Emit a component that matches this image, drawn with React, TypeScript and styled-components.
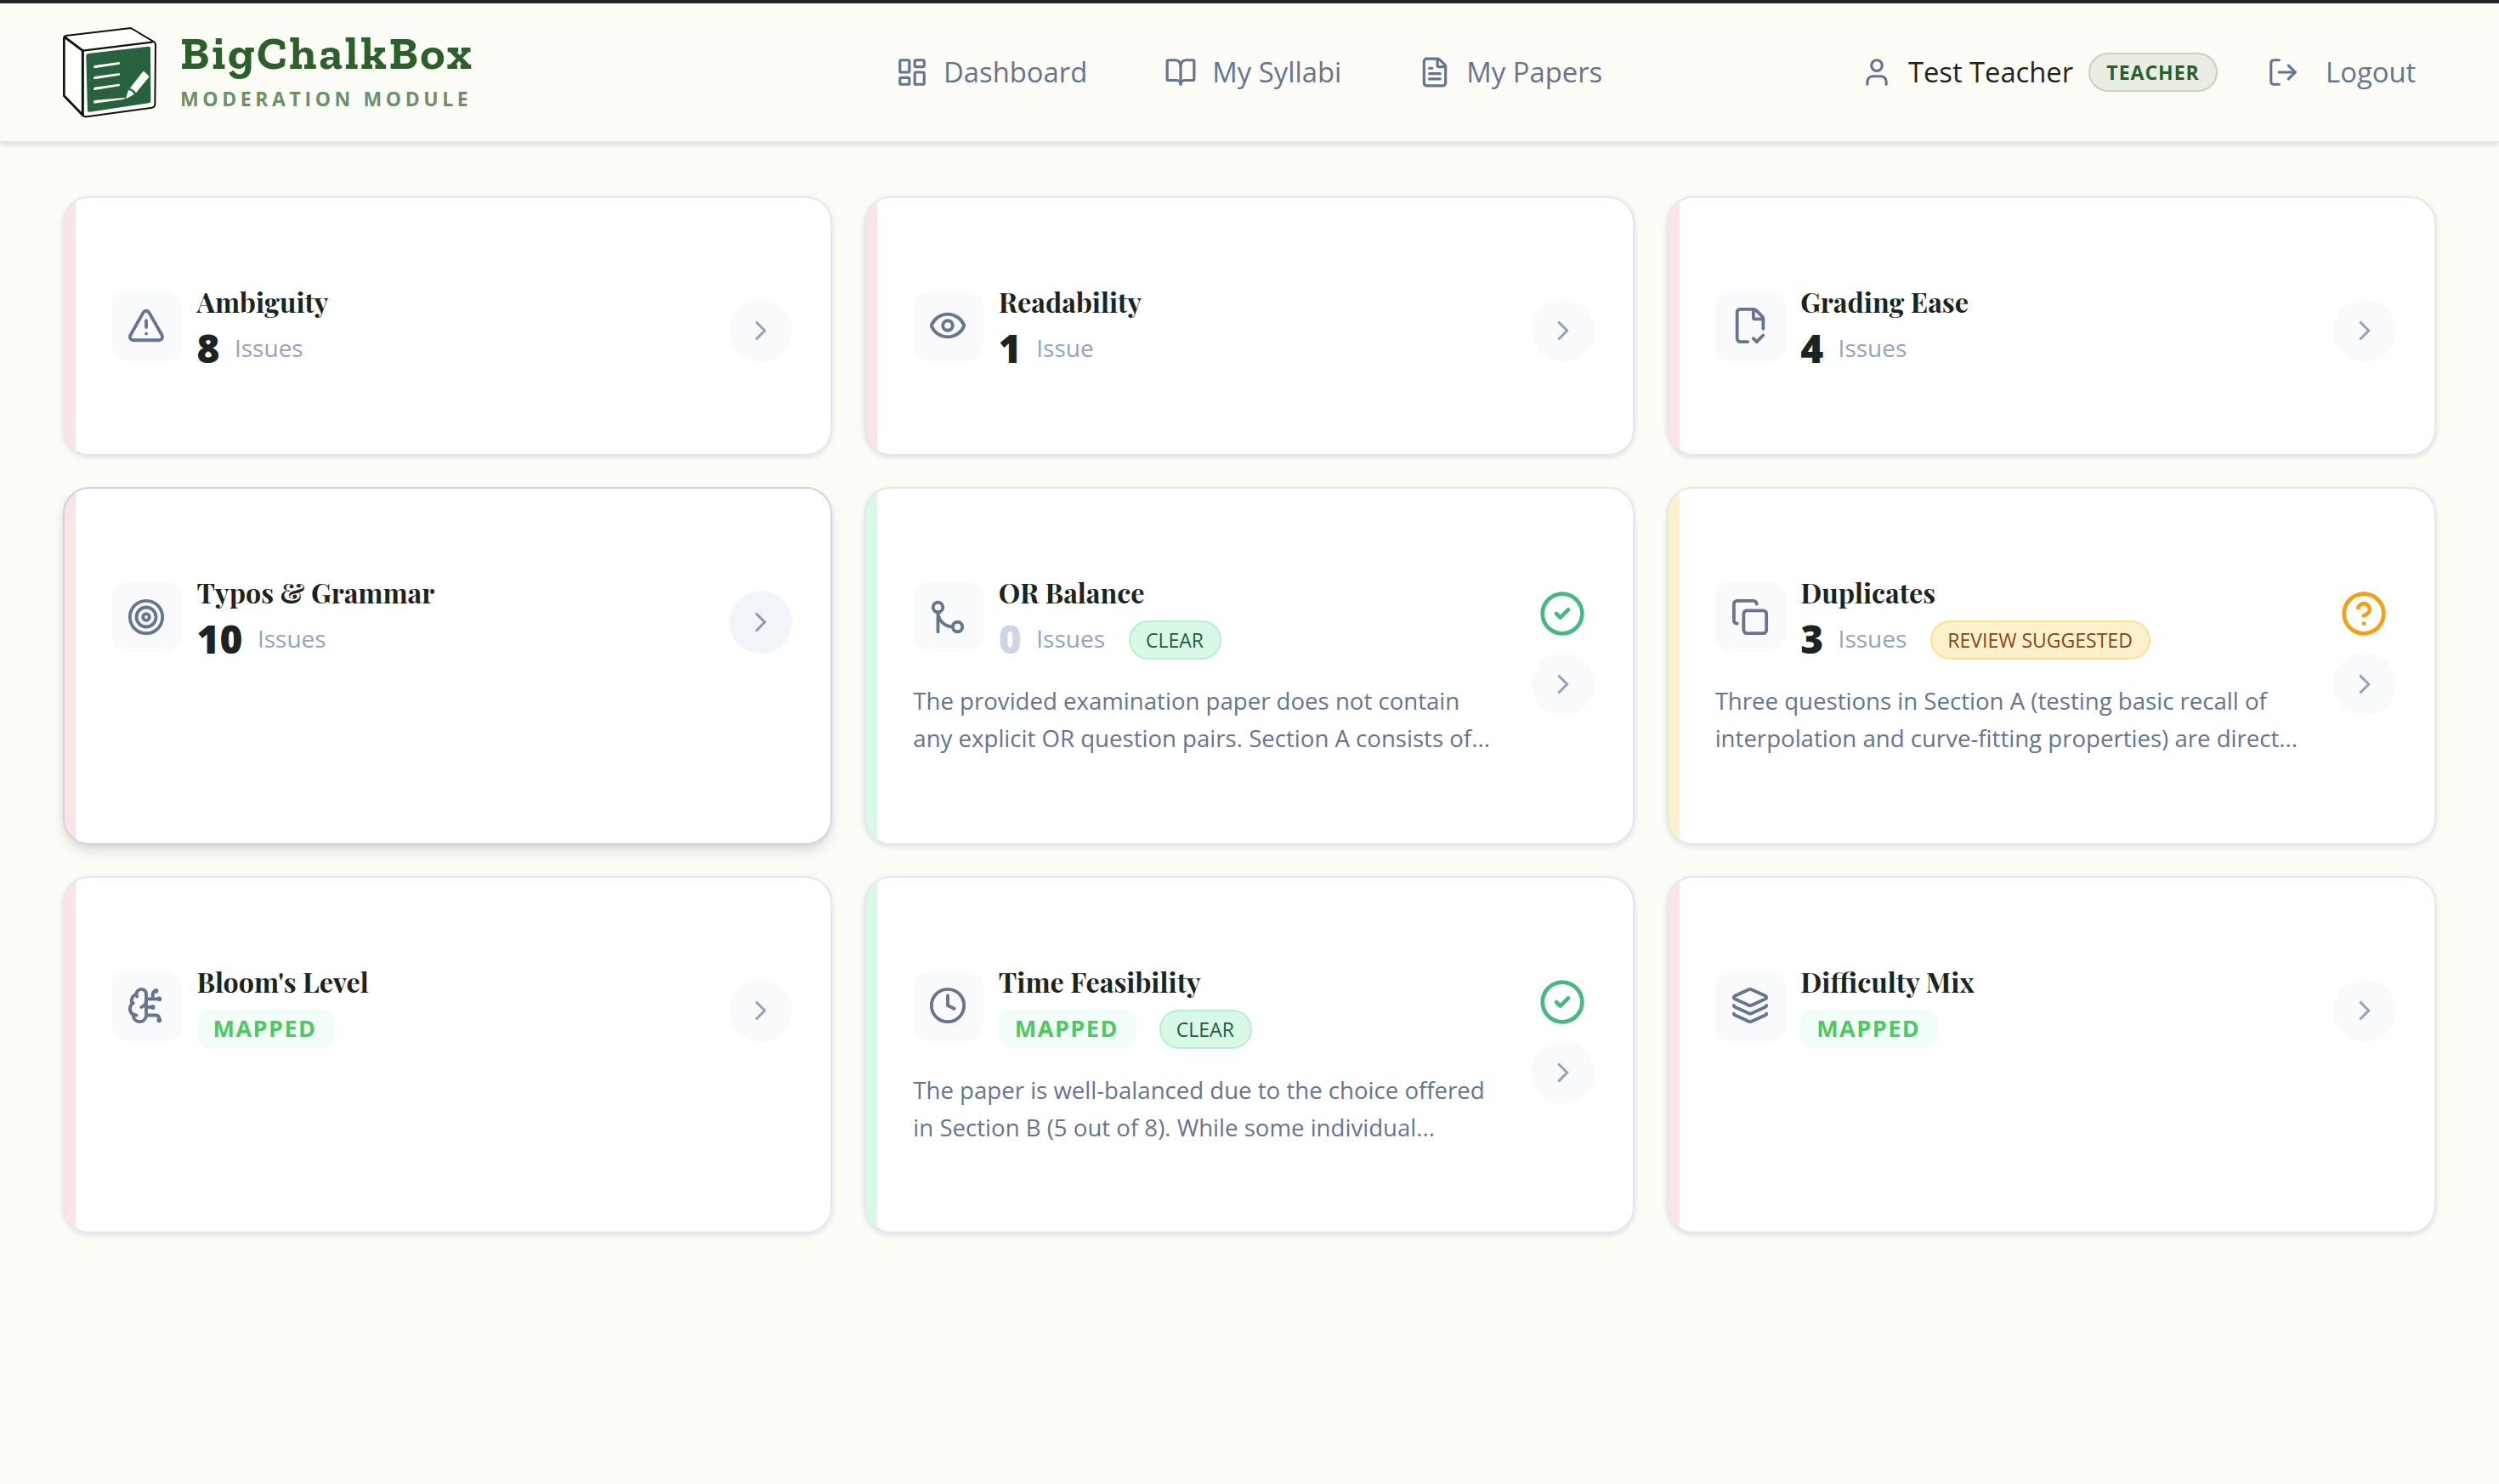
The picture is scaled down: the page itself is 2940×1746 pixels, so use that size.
import React from "react";
import styled, { createGlobalStyle } from "styled-components";
import {
  BookOpen,
  BrainCircuit,
  ChevronRight,
  CircleCheck,
  CircleQuestionMark,
  Clock,
  Copy,
  Eye,
  FileCheckCorner,
  FileText,
  GitMerge,
  Layers,
  LayoutDashboard,
  LogOut,
  Target,
  TriangleAlert,
  User,
  type LucideIcon,
} from "lucide-react";

type Tone = "red" | "green" | "yellow";

const barColor: Record<Tone, string> = {
  red: "#fce4e6",
  green: "#d8f9e6",
  yellow: "#fcf1cb",
};

const GlobalStyle = createGlobalStyle`
  *, *::before, *::after { box-sizing: border-box; }
  html, body { margin: 0; padding: 0; background: #fbfcf6; }
  body {
    font-family: "Open Sans", "Noto Sans", sans-serif;
    color: #1c2422;
    overflow: hidden;
  }
`;

const Page = styled.div`
  width: 2940px;
  height: 1746px;
  background: #fbfcf6;
  display: flex;
  flex-direction: column;
`;

const Header = styled.header`
  height: 168px;
  border-top: 4px solid #212629;
  border-bottom: 2px solid #e2e8f0;
  box-shadow: 0 2px 6px rgba(0, 0, 0, 0.15);
  display: grid;
  grid-template-columns: 981px 1fr 751px;
  align-items: center;
  padding: 0 0 0 73px;
`;

const Brand = styled.div`
  display: flex;
  align-items: center;
  gap: 27px;
`;

const BrandText = styled.div`
  display: flex;
  flex-direction: column;
`;

const BrandName = styled.div`
  margin-top: -4px;
  font-family: "Zilla Slab", "DejaVu Serif Condensed", "DejaVu Serif", serif;
  font-weight: 700;
  font-size: 55px;
  line-height: 60px;
  letter-spacing: 2.8px;
  color: #2d5f2a;
  white-space: nowrap;
`;

const BrandSub = styled.div`
  font-weight: 700;
  font-size: 23px;
  line-height: 32px;
  letter-spacing: 4.6px;
  color: #6c9069;
  white-space: nowrap;
  margin: 8px 0 2px;
`;

const Nav = styled.nav`
  display: flex;
  align-items: center;
  gap: 91px;
`;

const NavItem = styled.a<{ $gap?: number }>`
  display: flex;
  align-items: center;
  gap: ${(p) => p.$gap ?? 18}px;
  font-size: 32.8px;
  line-height: 44px;
  color: #66748f;
  white-space: nowrap;
`;

const Account = styled.div`
  display: flex;
  align-items: center;
`;

const UserName = styled.span`
  font-size: 32.7px;
  line-height: 44px;
  color: #1c2422;
  margin-left: 18px;
  white-space: nowrap;
`;

const RoleBadge = styled.span`
  height: 46px;
  width: 152px;
  margin: 0 58px 0 18px;
  display: flex;
  align-items: center;
  justify-content: center;
  border: 2px solid #c4d2bf;
  border-radius: 23px;
  background: #e9ede4;
  color: #2d5f2a;
  font-size: 23px;
  font-weight: 700;
  letter-spacing: 1px;
`;

const Grid = styled.main`
  display: grid;
  grid-template-columns: repeat(3, 1fr);
  grid-template-rows: 305px 420.2px 420.2px;
  gap: 37.4px 38px;
  padding: 63px 74px 0;
`;

const Card = styled.article<{ $tone: Tone; $hovered?: boolean }>`
  border: 2px solid ${(p) => (p.$hovered ? "#cbd5e4" : "#e2e8f0")};
  border-radius: 31px;
  background: linear-gradient(
    to right,
    ${(p) => barColor[p.$tone]} 13px,
    #ffffff 13px
  );
  box-shadow: ${(p) =>
    p.$hovered
      ? "0 8px 14px rgba(0, 0, 0, 0.1), 0 2px 5px rgba(0, 0, 0, 0.06)"
      : "0 2px 6px rgba(0, 0, 0, 0.12)"};
  display: flex;
  justify-content: space-between;
  align-items: flex-start;
  padding: 109px 45px 0 55px;
`;

const Body = styled.div`
  width: 694px;
`;

const Top = styled.div`
  display: flex;
  gap: 17.5px;
`;

const IconBox = styled.div`
  width: 83px;
  height: 83px;
  padding: 0 1px 0.5px 0;
  flex: none;
  border-radius: 19px;
  background: #f8fafc;
  color: #66748f;
  display: flex;
  align-items: center;
  justify-content: center;
`;

const Heading = styled.div`
  display: flex;
  flex-direction: column;
`;

const Title = styled.h3`
  margin: -5px 0 0;
  font-family: "Playfair Display", "Liberation Serif", serif;
  font-weight: 700;
  font-size: 32.2px;
  line-height: 36px;
  color: #1c2422;
  white-space: nowrap;
`;

const Stats = styled.div`
  display: flex;
  align-items: center;
  height: 46px;
  margin-top: 15px;
`;

const Count = styled.span<{ $muted?: boolean }>`
  margin-bottom: 4px;
  font-size: 46px;
  line-height: 46px;
  font-weight: 800;
  color: ${(p) => (p.$muted ? "#cbd5e4" : "#1c2422")};
`;

const Unit = styled.span`
  margin: 0 0 4px 17.5px;
  font-size: 28px;
  line-height: 40px;
  color: #96a3bd;
`;

const Mapped = styled.span`
  height: 45px;
  width: 161px;
  padding: 0 0 2px 19px;
  margin-bottom: 1px;
  display: flex;
  align-items: center;
  border-radius: 14px;
  background: #f1fdf6;
  color: #4fc763;
  font-size: 27px;
  font-weight: 700;
  letter-spacing: 1.5px;
`;

const Pill = styled.span<{ $tone: Tone }>`
  height: 46px;
  margin-left: 28px;
  padding: 0 19px 0 18px;
  display: flex;
  align-items: center;
  border-radius: 23px;
  border: 2px solid ${(p) => (p.$tone === "green" ? "#b4f0d0" : "#fae38c")};
  background: ${(p) => barColor[p.$tone]};
  color: ${(p) => (p.$tone === "green" ? "#205c47" : "#8a4418")};
  font-size: 23px;
  white-space: nowrap;
`;

const Summary = styled.p`
  margin: 26px 0 0;
  font-size: 27.6px;
  line-height: 44px;
  color: #66748f;
  white-space: pre;
`;

const Actions = styled.div`
  display: flex;
  flex-direction: column;
  align-items: center;
  gap: 18px;
  margin-top: 10.3px;
`;

const StatusIcon = styled.div`
  display: flex;
  margin: -1px 2px 0 0;
`;

const ArrowButton = styled.button<{ $hovered?: boolean }>`
  width: 74px;
  height: 74px;
  padding: 0;
  border: 0;
  border-radius: 50%;
  background: ${(p) => (p.$hovered ? "#f1f5f9" : "#f8fafc")};
  color: ${(p) => (p.$hovered ? "#8a98b2" : "#96a3bd")};
  display: flex;
  align-items: center;
  justify-content: center;
`;

const Logo = () => (
  <svg width="112" height="112" viewBox="39 27 336 336" fill="none">
    <path
      d="M53 66 L282 39 L364 88 Q369 92 369 98 L367 309 Q366 319 357 320 L126 352 Q116 353 110 346 L45 278 V76 Q46 68 53 66 Z"
      fill="#fffffb"
      stroke="#111"
      strokeWidth="6"
      strokeLinejoin="round"
    />
    <path d="M48 71 L112 119" stroke="#111" strokeWidth="9" strokeLinecap="round" />
    <path d="M46 74 V278 L113 347" stroke="#111" strokeWidth="8" strokeLinejoin="round" />
    <path d="M112 119 V346" stroke="#111" strokeWidth="9" strokeLinecap="round" />
    <path d="M112 119 L356 89" stroke="#111" strokeWidth="7" strokeLinecap="round" />
    <path
      d="M132 129 L344 104 Q351 103 351 110 L352 296 Q352 303 345 304 L136 335 Q129 336 129 329 L124 138 Q124 130 132 129 Z"
      fill="#27613e"
    />
    <path d="M153 171 L241 159 Q246 163 241 167 L153 181 Q147 177 153 171 Z" fill="#fffffb" />
    <path d="M153 210 L241 198 Q246 202 241 206 L153 220 Q147 216 153 210 Z" fill="#fffffb" />
    <path d="M153 248 L241 236 Q246 240 241 244 L153 258 Q147 254 153 248 Z" fill="#fffffb" />
    <path d="M153 294 L258 285 Q264 287 258 290 L153 305 Q147 300 153 294 Z" fill="#fffffb" />
    <path
      d="M325 192 Q327 191 329 193 L345 208 Q347 211 345 213 L300 268 Q291 254 278 252 Z"
      fill="#fffffb"
    />
    <path d="M273 258 Q287 259 293 273 L267 288 Q264 287 265 284 Z" fill="#fffffb" />
  </svg>
);

interface Metric {
  icon: LucideIcon;
  title: string;
  tone: Tone;
  count?: number;
  pill?: string;
  summary?: string;
  hovered?: boolean;
}

const metrics: Metric[] = [
  { icon: TriangleAlert, title: "Ambiguity", tone: "red", count: 8 },
  { icon: Eye, title: "Readability", tone: "red", count: 1 },
  { icon: FileCheckCorner, title: "Grading Ease", tone: "red", count: 4 },
  { icon: Target, title: "Typos & Grammar", tone: "red", count: 10, hovered: true },
  {
    icon: GitMerge,
    title: "OR Balance",
    tone: "green",
    count: 0,
    pill: "CLEAR",
    summary:
      "The provided examination paper does not contain\nany explicit OR question pairs. Section A consists of...",
  },
  {
    icon: Copy,
    title: "Duplicates",
    tone: "yellow",
    count: 3,
    pill: "REVIEW SUGGESTED",
    summary:
      "Three questions in Section A (testing basic recall of\ninterpolation and curve-fitting properties) are direct...",
  },
  { icon: BrainCircuit, title: "Bloom's Level", tone: "red" },
  {
    icon: Clock,
    title: "Time Feasibility",
    tone: "green",
    pill: "CLEAR",
    summary:
      "The paper is well-balanced due to the choice offered\nin Section B (5 out of 8). While some individual...",
  },
  { icon: Layers, title: "Difficulty Mix", tone: "red" },
];

const MetricCard = ({ icon: Icon, title, tone, count, pill, summary, hovered }: Metric) => (
  <Card $tone={tone} $hovered={hovered}>
    <Body>
      <Top>
        <IconBox>
          <Icon size={46} />
        </IconBox>
        <Heading>
          <Title>{title}</Title>
          <Stats>
            {count === undefined ? (
              <Mapped>MAPPED</Mapped>
            ) : (
              <>
                <Count $muted={count === 0}>{count}</Count>
                <Unit>{count === 1 ? "Issue" : "Issues"}</Unit>
              </>
            )}
            {pill && <Pill $tone={tone}>{pill}</Pill>}
          </Stats>
        </Heading>
      </Top>
      {summary && <Summary>{summary}</Summary>}
    </Body>
    <Actions>
      {pill && (
        <StatusIcon>
          {tone === "green" ? (
            <CircleCheck size={56} color="#46b983" />
          ) : (
            <CircleQuestionMark size={56} color="#f2a014" />
          )}
        </StatusIcon>
      )}
      <ArrowButton $hovered={hovered}>
        <ChevronRight size={38} />
      </ArrowButton>
    </Actions>
  </Card>
);

export default function App() {
  return (
    <Page>
      <GlobalStyle />
      <Header>
        <Brand>
          <Logo />
          <BrandText>
            <BrandName>BigChalkBox</BrandName>
            <BrandSub>MODERATION MODULE</BrandSub>
          </BrandText>
        </Brand>
        <Nav>
          <NavItem>
            <LayoutDashboard size={38} />
            Dashboard
          </NavItem>
          <NavItem>
            <BookOpen size={38} />
            My Syllabi
          </NavItem>
          <NavItem>
            <FileText size={38} />
            My Papers
          </NavItem>
        </Nav>
        <Account>
          <User size={38} color="#66748f" />
          <UserName>Test Teacher</UserName>
          <RoleBadge>TEACHER</RoleBadge>
          <NavItem $gap={31}>
            <LogOut size={38} />
            Logout
          </NavItem>
        </Account>
      </Header>
      <Grid>
        {metrics.map((m) => (
          <MetricCard key={m.title} {...m} />
        ))}
      </Grid>
    </Page>
  );
}
